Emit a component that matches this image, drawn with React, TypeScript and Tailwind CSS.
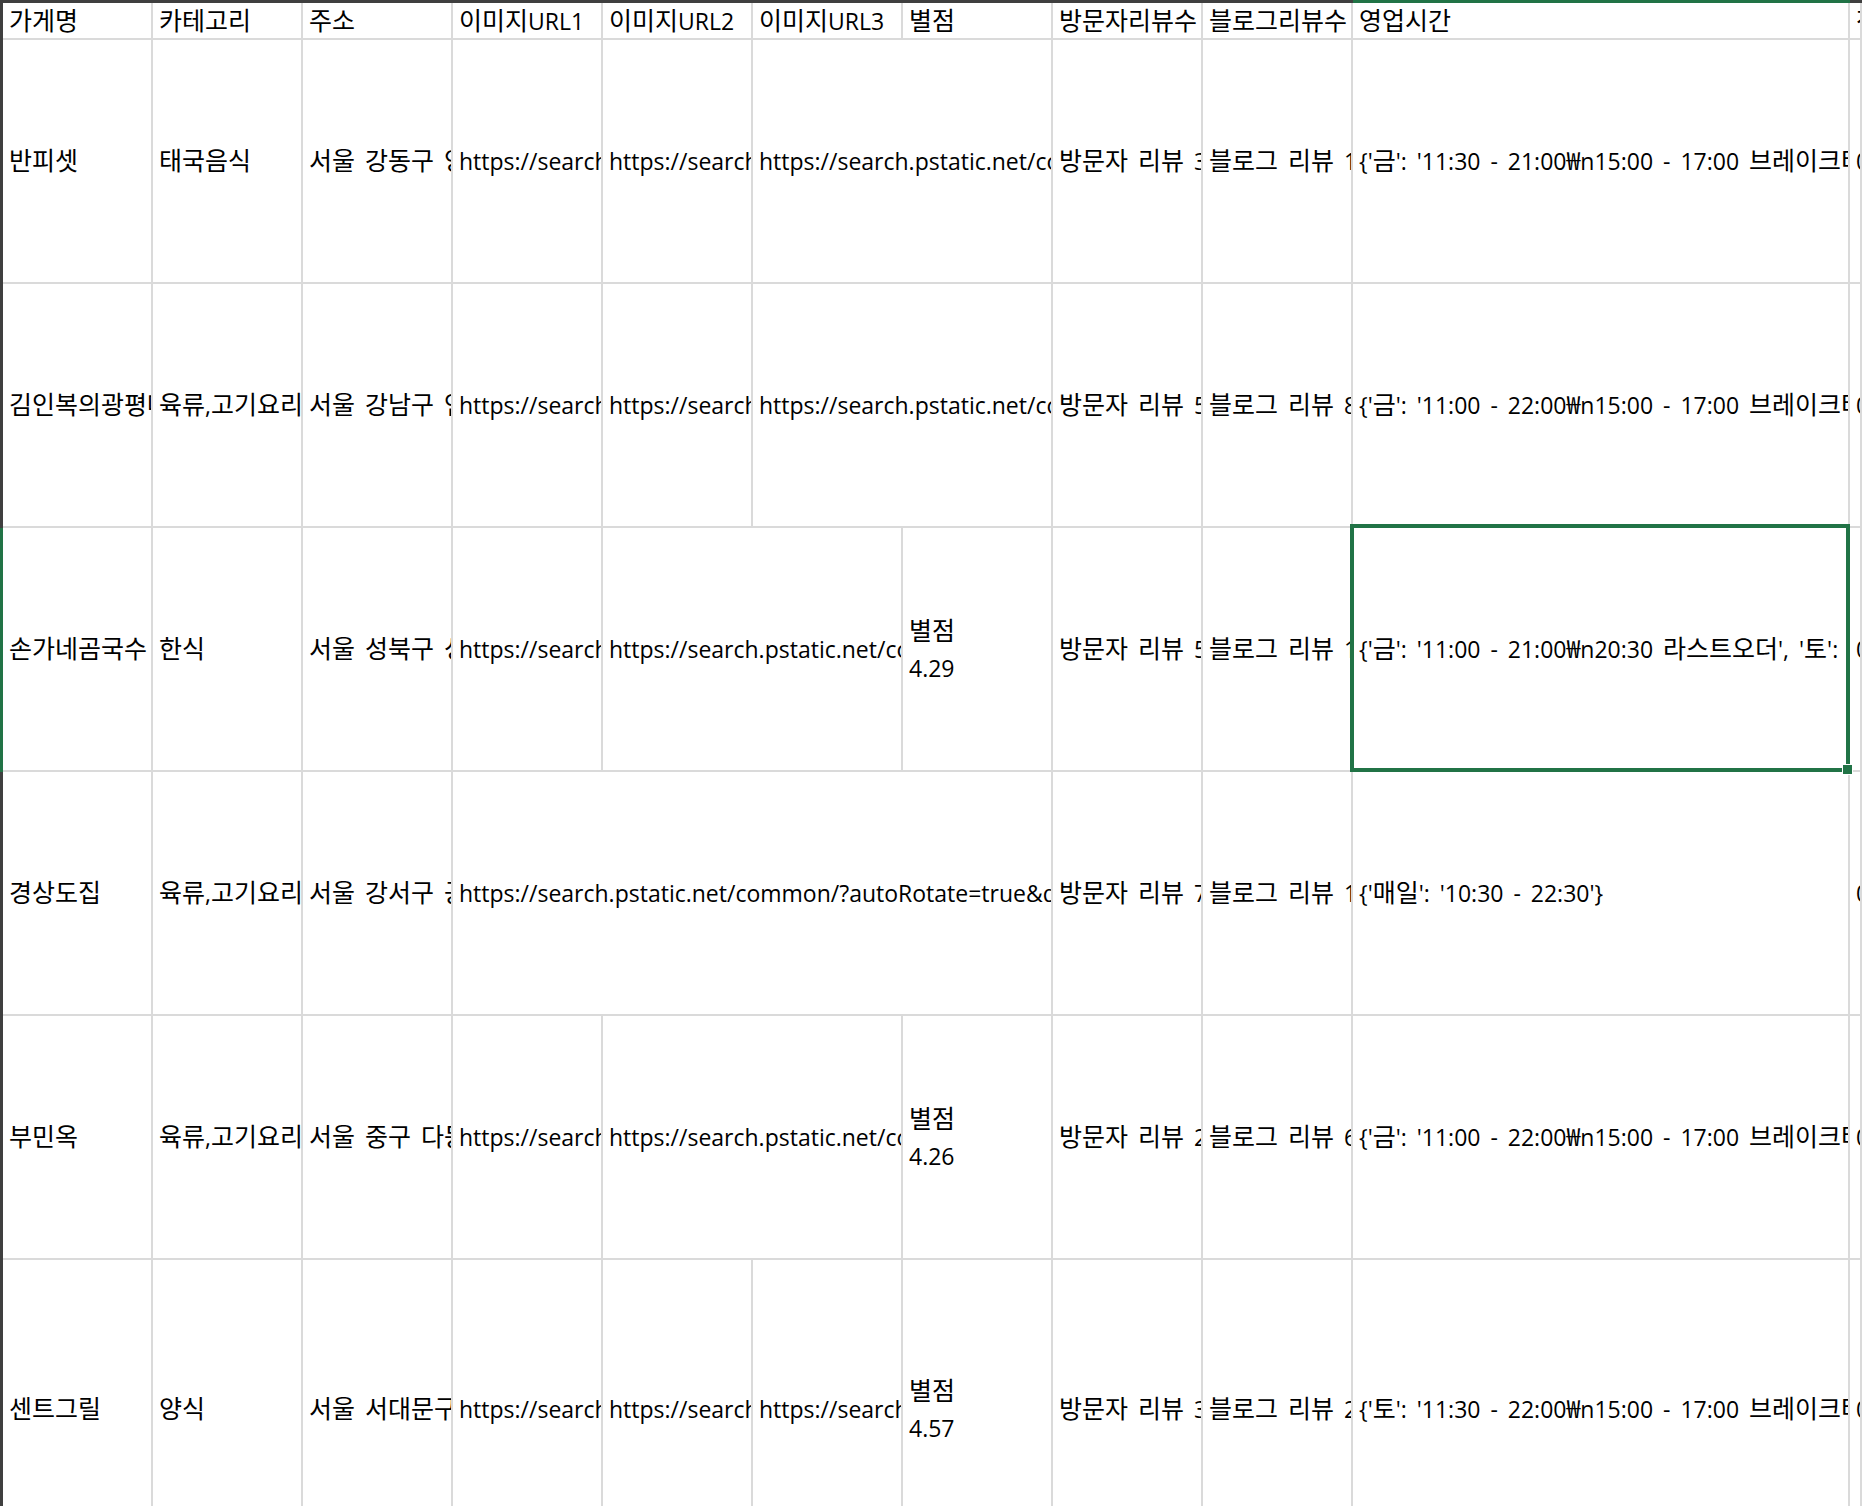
import React from 'react';

const FONT = { fontFamily: '"Open Sans", "Noto Sans CJK KR", sans-serif' };

const URL = 'https://search.pstatic.net/common/?autoRotate=true&quality=95&type=w750&src=https%3A%2F%2Fldb-phinf.pstatic.net';

const HEADERS = ['가게명', '카테고리', '주소', '이미지URL1', '이미지URL2', '이미지URL3', '별점', '방문자리뷰수', '블로그리뷰수', '영업시간', '전화번호'];

type Cell = { text: string; span?: number; selected?: boolean };

// span = how many columns the text overflows into (next cells empty)
const ROWS: Cell[][] = [
  [
    { text: '반피셋' },
    { text: '태국음식' },
    { text: '서울 강동구 양재대로 1480' },
    { text: URL },
    { text: URL },
    { text: URL, span: 2 },
    { text: '방문자 리뷰 312' },
    { text: '블로그 리뷰 156' },
    { text: "{'금': '11:30 - 21:00₩n15:00 - 17:00 브레이크타임', '토': '11:30 - 21:00'}" },
    { text: '0507-1372-4821' },
  ],
  [
    { text: '김인복의광평메밀국수' },
    { text: '육류,고기요리' },
    { text: '서울 강남구 언주로 164' },
    { text: URL },
    { text: URL },
    { text: URL, span: 2 },
    { text: '방문자 리뷰 518' },
    { text: '블로그 리뷰 824' },
    { text: "{'금': '11:00 - 22:00₩n15:00 - 17:00 브레이크타임', '토': '11:00 - 22:00'}" },
    { text: '02-573-2114' },
  ],
  [
    { text: '손가네곰국수' },
    { text: '한식' },
    { text: '서울 성북구 성북로 24' },
    { text: URL },
    { text: URL, span: 2 },
    { text: '별점\n4.29' },
    { text: '방문자 리뷰 542' },
    { text: '블로그 리뷰 118' },
    { text: "{'금': '11:00 - 21:00₩n20:30 라스트오더', '토': '11:00 - 21:00'}", selected: true },
    { text: '02-742-3318' },
  ],
  [
    { text: '경상도집' },
    { text: '육류,고기요리' },
    { text: '서울 강서구 공항대로 247' },
    { text: URL, span: 4 },
    { text: '방문자 리뷰 731' },
    { text: '블로그 리뷰 142' },
    { text: "{'매일': '10:30 - 22:30'}" },
    { text: '02-2662-9292' },
  ],
  [
    { text: '부민옥' },
    { text: '육류,고기요리' },
    { text: '서울 중구 다동길 24-12' },
    { text: URL },
    { text: URL, span: 2 },
    { text: '별점\n4.26' },
    { text: '방문자 리뷰 2,314' },
    { text: '블로그 리뷰 627' },
    { text: "{'금': '11:00 - 22:00₩n15:00 - 17:00 브레이크타임', '토': '11:00 - 21:00'}" },
    { text: '02-777-2345' },
  ],
  [
    { text: '센트그릴' },
    { text: '양식' },
    { text: '서울 서대문구 연희로 11' },
    { text: URL },
    { text: URL },
    { text: URL },
    { text: '별점\n4.57' },
    { text: '방문자 리뷰 3,106' },
    { text: '블로그 리뷰 245' },
    { text: "{'토': '11:30 - 22:00₩n15:00 - 17:00 브레이크타임', '일': '11:30 - 21:00'}" },
    { text: '0507-1430-7712' },
  ],
];

function spanClass(span?: number) {
  if (span === 2) return 'col-span-2';
  if (span === 4) return 'col-span-4';
  return '';
}

// hangul (and the won sign) in the sheet font runs wider than the latin
const WIDE = /([\uAC00-\uD7A3\u3131-\u318E\u20A9]+)/;

function Mixed({ text }: { text: string }) {
  const parts = text.split(WIDE);
  return (
    <>
      {parts.map((p, i) =>
        i % 2 === 1 ? (
          <span key={i} className="text-[25px]">{p}</span>
        ) : (
          <span key={i}>{p}</span>
        )
      )}
    </>
  );
}

function DataCell({ cell }: { cell: Cell }) {
  const lines = cell.text.split('\n');
  return (
    <div
      className={`relative flex flex-col justify-center min-w-0 border-r-2 border-b-2 border-[#dadada] ${spanClass(cell.span)} ${cell.selected ? 'z-10' : ''}`}
    >
      <div className="overflow-hidden whitespace-nowrap pl-[6px] leading-[37px]">
        {lines.map((l, i) => (
          <div key={i}><Mixed text={l} /></div>
        ))}
      </div>
      {cell.selected && (
        <>
          <div className="absolute -left-[3px] -top-[4px] -right-[2px] -bottom-[2px] border-4 border-[#217346] pointer-events-none" />
          <div className="absolute -right-[5px] -bottom-[5px] w-[11px] h-[11px] bg-[#217346] border border-white" />
        </>
      )}
    </div>
  );
}

export default function App() {
  return (
    <div className="w-[1862px] h-[1506px] overflow-hidden bg-white text-black text-[23px] [word-spacing:4px]" style={FONT}>
      <div className="grid grid-cols-[3px_repeat(9,150px)_497px_1fr] grid-rows-[3px_37px_repeat(5,244px)_300px]">
        {/* top strip: column header edge */}
        <div className="bg-[#3f3f3f]" />
        {HEADERS.map((h, i) => (
          <div key={h} className={i === 9 ? 'bg-[#217346]' : 'bg-[#3f3f3f]'} />
        ))}

        {/* header row */}
        <div className="bg-[#3f3f3f]" />
        {HEADERS.map(h => (
          <div key={h} className="flex items-center min-w-0 border-r-2 border-b-2 border-[#dadada]">
            <div className="overflow-hidden whitespace-nowrap pl-[6px]"><Mixed text={h} /></div>
          </div>
        ))}

        {ROWS.map((row, r) => (
          <React.Fragment key={r}>
            <div className={r === 2 ? 'bg-[#217346]' : 'bg-[#3f3f3f]'} />
            {row.map((cell, c) => (
              <DataCell key={c} cell={cell} />
            ))}
          </React.Fragment>
        ))}
      </div>
    </div>
  );
}
